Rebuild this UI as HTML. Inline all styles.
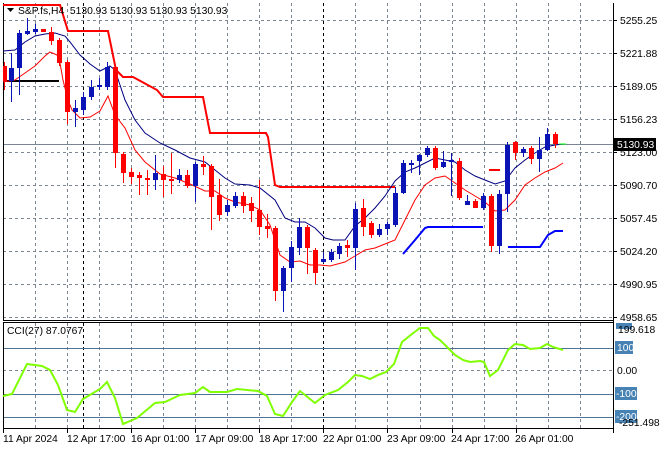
<!DOCTYPE html>
<html><head><meta charset="utf-8"><style>
html,body{margin:0;padding:0;background:#fff;width:660px;height:450px;overflow:hidden}
svg{display:block;font-family:"Liberation Sans",sans-serif;font-size:10.3px}
</style></head><body>
<svg width="660" height="450" viewBox="0 0 660 450" xmlns="http://www.w3.org/2000/svg">
<rect width="660" height="450" fill="#fff"/>
<g stroke="#7a8694" stroke-width="1" stroke-dasharray="3,3" fill="none">
<path d="M3 20.5H613M3 53.5H613M3 86.5H613M3 119.5H613M3 152.5H613M3 185.5H613M3 218.5H613M3 251.5H613M3 284.5H613M3 317.5H613"/>
<path d="M35.5 3V320M67.5 3V320M99.5 3V320M131.5 3V320M163.5 3V320M195.5 3V320M227.5 3V320M259.5 3V320M291.5 3V320M355.5 3V320M387.5 3V320M420.5 3V320M452.5 3V320M484.5 3V320M516.5 3V320M548.5 3V320M580.5 3V320"/>
<path d="M35.5 323V429M67.5 323V429M99.5 323V429M131.5 323V429M163.5 323V429M195.5 323V429M227.5 323V429M259.5 323V429M291.5 323V429M355.5 323V429M387.5 323V429M420.5 323V429M452.5 323V429M484.5 323V429M516.5 323V429M548.5 323V429M580.5 323V429"/>
<path d="M3 370.5H613"/>
</g>
<g stroke="#000" stroke-dasharray="3,3"><path d="M83.5 3V320M323.5 3V320M83.5 323V429M323.5 323V429"/></g>
<path d="M3 144.5H613" stroke="#7a8694"/>
<path d="M3 348.5H613M3 394.5H613M3 417.5H613" stroke="#4f7396"/>
<path d="M3.5 3V320M3.5 323V429M613.5 3V433M3 320.5H613M3 322.5H613M3 428.5H613" stroke="#000"/>
<polyline fill="none" stroke="#f00" stroke-width="2" points="3,5 60,5 68,31 108,31 116,70 123,77 133,77 157,90 163,97 203,97 210,133 266,133 268,137 275,185 280,187 395,187"/>
<path d="M489 170H500" stroke="#f00" stroke-width="2"/>
<path d="M3 81H59" stroke="#000" stroke-width="2"/>
<polyline fill="none" stroke="#0000ff" stroke-width="2" points="403,254 415,240 425,228 428,227 483,227"/>
<polyline fill="none" stroke="#0000ff" stroke-width="2" points="508,247 540,247 548,235 555,231 563,231"/>
<polyline fill="none" stroke="#000080" stroke-width="1" points="3,51 15,50 25,42 35,36 45,34 55,33 65,36 70,42 80,55 90,64 100,71 110,66 115,70 125,100 135,120 145,133 160,143 175,150 190,158 205,162 215,170 225,178 235,184 250,185 260,188 275,200 285,218 295,222 305,222 315,228 325,238 333,240 345,240 355,226 365,218 375,208 385,196 395,181 405,172 415,168 425,163 435,158 445,160 455,162 465,170 475,176 485,180 495,184 505,181 515,168 525,160 535,153 545,147 555,145 563,144"/>
<polyline fill="none" stroke="#f00" stroke-width="1" points="3,82 15,80 25,73 35,66 45,56 50,52 57,55 60,63 63,80 68,100 72,110 80,118 90,117 100,111 108,96 115,115 125,128 135,150 145,162 160,174 175,178 190,184 205,191 215,191 225,198 235,202 250,205 260,210 270,225 280,255 290,262 300,261 310,265 320,265 330,266 345,262 355,256 365,250 375,248 385,244 395,240 405,220 415,200 425,185 435,178 445,176 455,183 465,190 475,196 485,202 495,211 505,210 515,200 525,185 535,178 545,172 555,168 563,163"/>
<g fill="#f00" stroke="#f00">
<path d="M4.5 62V90M51.5 27V45M59.5 38V66M67.5 60V124M115.5 65V168M123.5 152V183M131.5 168V184M139.5 172V195M147.5 170V195M163.5 166V197M171.5 153V194M187.5 170V188M203.5 156V175M211.5 164V230M219.5 179V221M243.5 192V213M251.5 197V222M259.5 180V235M267.5 214V238M275.5 226V301M307.5 225V274M315.5 248V284M347.5 240V257M363.5 199V236M371.5 221V238M435.5 146V170M459.5 158V200M475.5 199V208M491.5 194V252M515.5 141V160M531.5 146V164M555.5 132V148"/>
</g>
<g fill="#f00">
<rect x="3" y="66" width="4" height="15"/><rect x="41" y="29" width="5" height="3"/><rect x="49" y="32" width="5" height="9"/><rect x="57" y="40" width="5" height="23"/><rect x="65" y="62" width="5" height="50"/><rect x="113" y="67" width="5" height="86"/><rect x="121" y="154" width="5" height="19"/><rect x="129" y="172" width="5" height="5"/><rect x="137" y="175" width="5" height="3"/><rect x="145" y="178" width="5" height="2"/><rect x="161" y="174" width="5" height="6"/><rect x="169" y="179" width="5" height="2"/><rect x="185" y="175" width="5" height="11"/><rect x="201" y="164" width="5" height="3"/><rect x="209" y="166" width="5" height="31"/><rect x="217" y="195" width="5" height="20"/><rect x="241" y="196" width="5" height="10"/><rect x="249" y="203" width="5" height="8"/><rect x="257" y="210" width="5" height="17"/><rect x="265" y="226" width="5" height="3"/><rect x="273" y="228" width="5" height="63"/><rect x="305" y="227" width="5" height="21"/><rect x="313" y="250" width="5" height="23"/><rect x="345" y="245" width="5" height="3"/><rect x="361" y="208" width="5" height="19"/><rect x="369" y="223" width="5" height="12"/><rect x="433" y="148" width="5" height="20"/><rect x="457" y="161" width="5" height="37"/><rect x="473" y="201" width="5" height="7"/><rect x="489" y="196" width="5" height="50"/><rect x="513" y="142" width="5" height="11"/><rect x="529" y="148" width="5" height="11"/><rect x="553" y="134" width="5" height="10"/>
</g>
<g stroke="#0a14b4">
<path d="M11.5 53V102M19.5 30V95M27.5 18V35M35.5 24V34M75.5 100V127M83.5 92V115M91.5 80V100M99.5 78V90M107.5 62V90M155.5 155V190M179.5 169V183M195.5 162V202M227.5 200V216M235.5 192V208M283.5 266V312M291.5 241V282M299.5 218V255M323.5 252V263M331.5 249V262M339.5 243V259M355.5 203V270M379.5 224V237M387.5 222V235M395.5 187V227M403.5 160V194M411.5 160V173M419.5 154V175M427.5 146V157M443.5 151V168M451.5 153V196M467.5 195V205M483.5 193V210M499.5 190V254M507.5 142V212M523.5 147V157M539.5 137V172M547.5 128V151"/>
</g>
<g fill="#0a14b4">
<rect x="9" y="68" width="5" height="13"/><rect x="17" y="33" width="5" height="35"/><rect x="25" y="31" width="5" height="3"/><rect x="33" y="29" width="5" height="3"/><rect x="73" y="108" width="5" height="4"/><rect x="81" y="97" width="5" height="13"/><rect x="89" y="87" width="5" height="10"/><rect x="97" y="85" width="5" height="2"/><rect x="105" y="67" width="5" height="20"/><rect x="153" y="173" width="5" height="7"/><rect x="177" y="175" width="5" height="5"/><rect x="193" y="164" width="5" height="22"/><rect x="225" y="205" width="5" height="7"/><rect x="233" y="196" width="5" height="10"/><rect x="281" y="268" width="5" height="23"/><rect x="289" y="247" width="5" height="21"/><rect x="297" y="227" width="5" height="21"/><rect x="321" y="259" width="5" height="3"/><rect x="329" y="252" width="5" height="8"/><rect x="337" y="246" width="5" height="8"/><rect x="353" y="209" width="5" height="39"/><rect x="377" y="229" width="5" height="6"/><rect x="385" y="224" width="5" height="5"/><rect x="393" y="193" width="5" height="32"/><rect x="401" y="163" width="5" height="30"/><rect x="409" y="163" width="5" height="2"/><rect x="417" y="155" width="5" height="6"/><rect x="425" y="148" width="5" height="7"/><rect x="441" y="162" width="5" height="5"/><rect x="449" y="160" width="5" height="2"/><rect x="465" y="201" width="5" height="4"/><rect x="481" y="196" width="5" height="12"/><rect x="497" y="194" width="5" height="52"/><rect x="505" y="145" width="5" height="49"/><rect x="521" y="149" width="5" height="4"/><rect x="537" y="150" width="5" height="9"/><rect x="545" y="134" width="5" height="16"/>
</g>
<path d="M559 144H566" stroke="#00ff00"/>
<polyline fill="none" stroke="#7fff00" stroke-width="2" points="3,396 12,394 27,364 42,366 50,370 58,385 67,410 75,412 83,399 100,389 107,382 115,398 123,424 137,418 155,403 165,402 180,395 195,393 203,387 210,392 227,392 237,389 258,391 267,396 275,414 283,416 292,402 300,391 315,403 325,395 338,390 348,382 355,375 362,376 370,379 378,375 386,372 394,364 402,342 412,334 420,328 428,328 434,336 440,340 447,347 455,355 463,360 470,362 480,361 484,362 490,376 498,370 508,350 515,344 523,345 530,349 540,348 547,344 553,347 563,350"/>
<path d="M7 8H14L10.5 12Z" fill="#000"/>
<text x="18" y="14" fill="#000">S&amp;P.fs,H4&#160;&#160;5130.93 5130.93 5130.93 5130.93</text>
<text x="7" y="334" fill="#000">CCI(27) 87.0767</text>
<g fill="#000">
<path d="M613 20.5H617M613 53.5H617M613 86.5H617M613 119.5H617M613 152.5H617M613 185.5H617M613 218.5H617M613 251.5H617M613 284.5H617M613 317.5H617" stroke="#000"/>
<text x="620" y="24">5255.25</text><text x="620" y="57">5221.88</text><text x="620" y="90">5189.05</text><text x="620" y="123">5156.23</text><text x="620" y="156">5123.00</text><text x="620" y="189">5090.70</text><text x="620" y="222">5057.45</text><text x="620" y="255">5024.20</text><text x="620" y="288">4990.95</text><text x="620" y="321">4958.65</text>
</g>
<rect x="614" y="138" width="42" height="13" fill="#000"/>
<text x="617" y="148" fill="#fff">5130.93</text>
<rect x="616" y="323" width="16" height="6" fill="#4682b4"/>
<text x="618" y="333" fill="#000">199.618</text>
<rect x="615" y="341" width="18" height="13" fill="#4682b4"/>
<text x="617" y="351" fill="#fff">100</text>
<text x="617" y="374" fill="#000">0.00</text>
<rect x="615" y="387" width="22" height="13" fill="#4682b4"/>
<text x="616" y="397" fill="#fff">-100</text>
<rect x="615" y="410" width="22" height="13" fill="#4682b4"/>
<text x="616" y="420" fill="#fff">-200</text>
<text x="619" y="426" fill="#000">-251.4988</text>
<g fill="#000">
<path d="M3.5 429V433M67.5 429V433M131.5 429V433M195.5 429V433M259.5 429V433M323.5 429V433M387.5 429V433M452.5 429V433M516.5 429V433" stroke="#000"/>
<text x="3" y="442">11 Apr 2024</text><text x="67" y="442">12 Apr 17:00</text><text x="131" y="442">16 Apr 01:00</text><text x="195" y="442">17 Apr 09:00</text><text x="259" y="442">18 Apr 17:00</text><text x="323" y="442">22 Apr 01:00</text><text x="387" y="442">23 Apr 09:00</text><text x="451" y="442">24 Apr 17:00</text><text x="515" y="442">26 Apr 01:00</text>
</g>
</svg>
</body></html>
